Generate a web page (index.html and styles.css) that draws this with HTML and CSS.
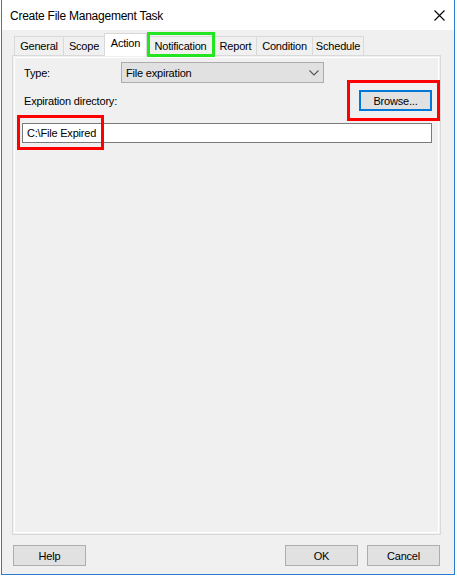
FILE: index.html
```html
<!DOCTYPE html>
<html>
<head>
<meta charset="utf-8">
<link rel="stylesheet" href="styles.css">
</head>
<body>
<div class="window">
  <div class="titlebar">
    <span class="title">Create File Management Task</span>
    <svg class="close" width="11" height="11" viewBox="0 0 11 11"><path d="M0.5 0.5L10.5 10.5M10.5 0.5L0.5 10.5" stroke="#000" stroke-width="1.1" fill="none"/></svg>
  </div>
  <div class="client">
    <div class="tabs">
      <div class="tab t-general">General</div>
      <div class="tab t-scope">Scope</div>
      <div class="tab t-action active">Action</div>
      <div class="tab t-notif">Notification</div>
      <div class="tab t-report">Report</div>
      <div class="tab t-cond">Condition</div>
      <div class="tab t-sched">Schedule</div>
    </div>
    <div class="panel">
      <div class="page">
        <div class="row row-type">
          <span class="label">Type:</span>
          <div class="combo">
            <span class="combo-text">File expiration</span>
            <svg class="chev" width="10" height="6" viewBox="0 0 10 6"><path d="M0.5 0.5L5 5L9.5 0.5" stroke="#555" stroke-width="1.1" fill="none"/></svg>
          </div>
        </div>
        <div class="row row-dir">
          <span class="label">Expiration directory:</span>
          <button class="btn btn-default">Browse...</button>
        </div>
        <div class="input">C:\File Expired</div>
      </div>
    </div>
    <div class="footer">
      <button class="btn">Help</button>
      <span class="spacer"></span>
      <button class="btn">OK</button>
      <button class="btn btn-cancel">Cancel</button>
    </div>
  </div>
  <div class="mark mark-green"></div>
  <div class="mark mark-red mark-browse"></div>
  <div class="mark mark-red mark-path"></div>
</div>
</body>
</html>
```

FILE: styles.css
```css
html, body {
  margin: 0;
  padding: 0;
  background: #ffffff;
}
body {
  font-family: "Liberation Sans", Arial, sans-serif;
  font-size: 11px;
  letter-spacing: -0.2px;
  color: #000;
}
.window {
  position: relative;
  margin-left: 1px;
  width: 452px;
  height: 574px;
  border-left: 1px solid #2b7bd0;
  border-right: 1px solid #2b7bd0;
  border-bottom: 1px solid #2b7bd0;
  background: #f0f0f0;
}
.titlebar {
  height: 30px;
  background: #fff;
  display: flex;
  align-items: center;
  padding-left: 8px;
  padding-right: 9px;
  box-sizing: border-box;
}
.title {
  font-size: 12px;
  letter-spacing: -0.25px;
  padding-top: 2px;
}
.close {
  margin-left: auto;
  margin-top: 1px;
}
.client {
  height: 544px;
  display: flex;
  flex-direction: column;
}
.tabs {
  display: flex;
  align-items: flex-end;
  height: 25px;
  margin-left: 12px;
}
.tab {
  box-sizing: border-box;
  height: 19px;
  border-top: 1px solid #d9d9d9;
  border-left: 1px solid #d9d9d9;
  background: #f0f0f0;
  text-align: center;
  line-height: 18px;
}
.tab.active {
  height: 23px;
  margin-bottom: -1px;
  background: #fff;
  border-right: 1px solid #d9d9d9;
  position: relative;
  z-index: 2;
  line-height: 19px;
}
.tab.active + .tab { border-left: none; }
.t-sched { border-right: 1px solid #d9d9d9; }
.t-general { width: 49px; }
.t-scope { width: 41px; }
.t-action { width: 43px; }
.t-notif { width: 67px; }
.t-report { width: 42px; }
.t-cond { width: 56px; }
.t-sched { width: 52px; }
.panel {
  position: relative;
  z-index: 1;
  box-sizing: border-box;
  margin-left: 10px;
  width: 429px;
  height: 480px;
  border: 1px solid #d9d9d9;
  padding: 1px;
}
.page {
  box-sizing: border-box;
  height: 100%;
  border: 1px solid #fff;
  display: flex;
  flex-direction: column;
}
.row {
  display: flex;
  align-items: center;
  height: 21px;
  padding-left: 9px;
}
.row-type { margin-top: 4px; }
.row-dir { margin-top: 7px; padding-right: 6px; }
.label { width: 97px; flex: none; }
.row-dir .label { width: auto; }
.combo {
  box-sizing: border-box;
  width: 203px;
  height: 21px;
  background: #e1e1e1;
  border: 1px solid #adadad;
  display: flex;
  align-items: center;
  padding-left: 4px;
  padding-right: 4px;
}
.chev { margin-left: auto; }
.btn {
  box-sizing: border-box;
  width: 73px;
  height: 21px;
  padding: 0;
  background: #e1e1e1;
  border: 1px solid #adadad;
  font-family: inherit;
  font-size: 11px;
  letter-spacing: -0.2px;
  color: #000;
}
.btn-default {
  margin-left: auto;
  border: 2px solid #0078d7;
}
.input {
  box-sizing: border-box;
  margin-top: 12px;
  margin-left: 7px;
  width: 410px;
  height: 20px;
  background: #fff;
  border: 1px solid #7a7a7a;
  padding-left: 4px;
  line-height: 18px;
}
.footer {
  display: flex;
  margin-top: 10px;
  padding-left: 11px;
  padding-right: 14px;
}
.spacer { flex: 1; }
.btn-cancel { margin-left: 9px; }
.mark {
  position: absolute;
  box-sizing: border-box;
  border: 3px solid #f00;
  z-index: 5;
}
.mark-green {
  border-color: #22e622;
  left: 145px;
  top: 32px;
  width: 68px;
  height: 25px;
}
.mark-browse {
  left: 345px;
  top: 80px;
  width: 93px;
  height: 41px;
}
.mark-path {
  left: 15px;
  top: 115px;
  width: 87px;
  height: 35px;
}
```
